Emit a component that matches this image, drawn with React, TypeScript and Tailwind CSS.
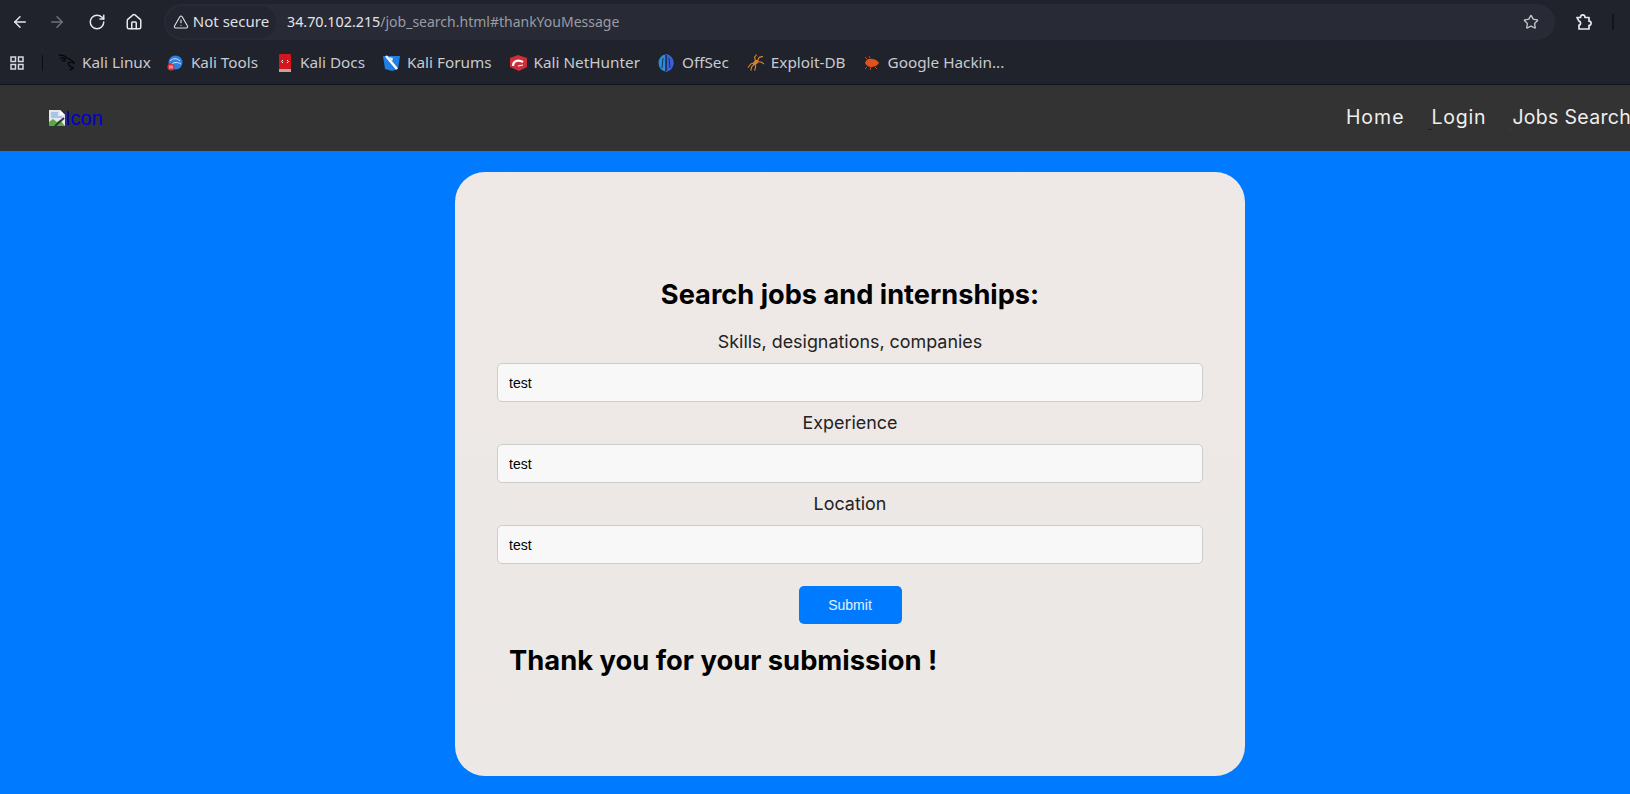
import React from "react";
import { ArrowLeft, ArrowRight, RotateCw, House, TriangleAlert, Star } from "lucide-react";

const Puzzle = () => (
  <svg width="20" height="20" viewBox="0 0 20 20" fill="none" stroke="#e6e7ea" strokeWidth="1.7" strokeLinejoin="round">
    <path d="M3 5.500h3.600a2.200 2.200 0 1 1 4.300 0H15v3.700a2.100 2.100 0 1 1 0 4.200V17H5v-3.800a2.100 2.100 0 0 0 0-4.100z" />
  </svg>
);

const Apps = () => (
  <svg width="16" height="16" viewBox="0 0 16 16" fill="none" stroke="#d8d9dc" strokeWidth="1.5">
    <rect x="2" y="2" width="4.5" height="4.5" /><rect x="9.5" y="2" width="4.5" height="4.5" />
    <rect x="2" y="9.5" width="4.5" height="4.5" /><rect x="9.5" y="9.5" width="4.5" height="4.5" />
  </svg>
);

const KaliLinux = () => (
  <svg width="18" height="18" viewBox="0 0 18 18" fill="none" stroke="#050507" strokeWidth="1.3">
    <path d="M1 1c4-1 7 1 9 3 3 1 6 3 7 5-2-1-5-1-6 0 0 2 1 4 5 5-2 2-3 3-4 2M2 4c2-1 4 0 6 1M4 7c2-1 3-1 4 0" />
  </svg>
);
const KaliTools = () => (
  <svg width="16" height="16" viewBox="0 0 16 16">
    <circle cx="8.5" cy="7.5" r="7" fill="#2f7fe0" />
    <path d="M3 6c3-3 7-3 10 0M5 9c2-2 6-2 9 0" stroke="#cfe4fb" strokeWidth="1" fill="none" />
    <circle cx="4" cy="12" r="3.6" fill="#dc2f3a" />
    <path d="M3 10.500v3M5 10.500v3" stroke="#fff" strokeWidth="0.9" />
  </svg>
);
const KaliDocs = () => (
  <svg width="14" height="18" viewBox="0 0 14 18">
    <rect x="1" y="0" width="12" height="15" rx="1" fill="#d2161e" />
    <rect x="1" y="15" width="12" height="3" fill="#c9a0a0" />
    <path d="M5 6 3.500 7.500 5 9M9 6l1.500 1.500L9 9" stroke="#fff" strokeWidth="1" fill="none" />
  </svg>
);
const KaliForums = () => (
  <svg width="17" height="16" viewBox="0 0 17 16">
    <path d="M0 1h17l-2 13-6 2-7-2z" fill="#1f7fe8" />
    <path d="M3 1l11 13" stroke="#fff" strokeWidth="2.4" />
    <path d="M6 2l4 1-1 4z" fill="#e8eef5" />
  </svg>
);
const NetHunter = () => (
  <svg width="17" height="16" viewBox="0 0 17 16">
    <path d="M0 3 8 0l9 3v9l-8 4-9-4z" fill="#c9303a" />
    <path d="M3 11c0-5 5-7 10-4" stroke="#fff" strokeWidth="2.2" fill="none" />
    <path d="M8 11l5-1" stroke="#fff" strokeWidth="1.2" />
  </svg>
);
const OffSec = () => (
  <svg width="16" height="18" viewBox="0 0 16 18">
    <ellipse cx="8" cy="9" rx="7.5" ry="8.5" fill="#2b8fd8" />
    <path d="M8 0C11 0 15 4 15.500 9 15.500 13 12 17 8 18z" fill="#3b5fd8" />
    <path d="M8 1v16" stroke="#20222c" strokeWidth="1.4" />
    <path d="M5 4 4 14M11 4l1 10" stroke="#1d2f5c" strokeWidth="1" />
  </svg>
);
const ExploitDb = () => (
  <svg width="18" height="18" viewBox="0 0 18 18" fill="none" stroke="#d9842a" strokeWidth="1.2">
    <path d="M7 9c2-3 4-3 5-2-1 2-3 4-5 4z" fill="#d9842a" />
    <path d="M7 9 4 10l-3 4M7 11l-2 2-1 4M9 11v3l-1 3M9 7 8 3l2-3M11 7l2-4 4-1M12 8l3 0 3 2" />
  </svg>
);
const Ghdb = () => (
  <svg width="16" height="14" viewBox="0 0 16 14">
    <path d="M1 7c1-4 4-5 7-4 3 0 6 2 7 4-2 3-5 4-8 4-3 0-5-2-6-4z" fill="#e0531c" />
    <path d="M3 3 1 1M6 2 5 0M3 11l-2 2M7 11l-1 3M11 11l2 2" stroke="#c9481a" strokeWidth="1" />
  </svg>
);

const BrokenImage = () => (
  <svg width="16" height="16" viewBox="0 0 16 16" className="shrink-0">
    <path d="M0 0h11l5 5v11H0z" fill="#e4e8ee" />
    <path d="M11 0v5h5z" fill="#fff" />
    <path d="M2 2h7v4h4v2H2z" fill="#a9c4ec" />
    <path d="M0 16V12l4-3 4 3 3-2 5 6z" fill="#5aa845" />
    <path d="M6 16l9-8" stroke="#333" strokeWidth="2" />
  </svg>
);

const bookmarks: [React.ReactNode, string][] = [
  [<KaliLinux />, "Kali Linux"],
  [<KaliTools />, "Kali Tools"],
  [<KaliDocs />, "Kali Docs"],
  [<KaliForums />, "Kali Forums"],
  [<NetHunter />, "Kali NetHunter"],
  [<OffSec />, "OffSec"],
  [<ExploitDb />, "Exploit-DB"],
  [<Ghdb />, "Google Hackin..."],
];

const Field = ({ label }: { label: string }) => (
  <div className="flex flex-col items-center">
    <label className="h-[21px] flex items-center text-[17.900px] text-[#222] [font-family:Inter,sans-serif] font-normal translate-y-[1px]">{label}</label>
    <input
      readOnly
      value="test"
      className="mt-[11px] w-full h-[39px] rounded-[5px] border border-[#cccccc] bg-[#f8f8f8] px-[11px] text-[14px] text-black outline-none [font-family:'Liberation_Sans',sans-serif]"
    />
  </div>
);

export default function App() {
  return (
    <div className="w-[1630px] h-[794px] overflow-hidden flex flex-col bg-[#007bff]">
      <div className="bg-[#20222c] shrink-0 [font-family:'Noto_Sans',sans-serif]">
        <div className="h-[43px] flex items-center">
          <div className="flex items-center pl-[11px] text-[#e6e7ea]">
            <ArrowLeft size={18} strokeWidth={2} />
            <ArrowRight size={18} strokeWidth={2} className="ml-[19px] text-[#6f7178]" />
            <RotateCw size={18} strokeWidth={2} className="ml-[22px]" />
            <House size={18} strokeWidth={2} className="ml-[19px]" />
          </div>
          <div className="ml-[21px] w-[1391px] h-[36px] rounded-full bg-[#282a36] flex items-center">
            <div className="h-[32px] ml-[2px] w-[110px] rounded-full bg-[#232530] flex items-center justify-center gap-[4px] text-[#dfe0e3] text-[15px]">
              <TriangleAlert size={16} strokeWidth={1.7} />
              <span>Not secure</span>
            </div>
            <div className="ml-[11px] text-[14px] text-[#9a9ca3] whitespace-nowrap">
              <span className="text-[#e4e5e8] text-[14.300px]">34.70.102.215</span>/job_search.html#thankYouMessage
            </div>
            <Star size={16} strokeWidth={2} className="ml-auto mr-[16px] text-[#c4c5c9]" />
          </div>
          <div className="ml-[19px]"><Puzzle /></div>
          <div className="ml-[18px] w-[2px] h-[16px] bg-[#14151b]" />
        </div>
        <div className="h-[39px] flex items-center pl-[9px] pb-[2px] box-content border-b border-[#14151b]">
          <Apps />
          <div className="ml-[17px] mr-[15px] w-[1px] h-[16px] bg-[#0c0d12]" />
          <div className="flex items-center gap-[18px]">
            {bookmarks.map(([icon, name], i) => (
              <div key={name} className={i === 0 ? "flex items-center gap-[7px] text-[15.300px] text-[#c9cbd0] whitespace-nowrap mr-[-2px]" : "flex items-center gap-[7px] text-[15.300px] text-[#c9cbd0] whitespace-nowrap"}>
                <span className="w-[17px] flex justify-center">{icon}</span>
                <span>{name}</span>
              </div>
            ))}
          </div>
        </div>
      </div>

      <div className="h-[66px] shrink-0 bg-[#333333] flex items-center pl-[49px] overflow-hidden">
        <a className="flex items-center text-[#0000cc] text-[20px] [font-family:'Liberation_Sans',sans-serif]">
          <BrokenImage />
          <span>Icon</span>
        </a>
        <nav className="ml-auto flex items-center text-[19.500px] text-[#eeeeee] whitespace-nowrap [font-family:Inter,sans-serif] translate-x-[1px]">
          <span className="tracking-[1px]">Home</span>
          <span className="ml-[23px] w-[4px] self-end mb-[3px] h-[1px] bg-[#0000ee]" />
          <span className="tracking-[0.800px]">Login</span>
          <span className="ml-[22px] w-[4px] self-end mb-[3px] h-[1px] bg-[#551a8b]" />
          <span className="tracking-[0.300px]">Jobs Search</span>
        </nav>
      </div>

      <div className="pt-[21px] pl-[455px]">
        <div className="w-[790px] h-[604px] rounded-[30px] bg-[#eee9e6] bg-linear-to-b from-[#eee9e6] to-[#ece8e5] px-[42px] pt-[107px]">
          <h2 className="text-center text-[27.200px] leading-[32px] font-bold text-black [font-family:Inter,sans-serif]">Search jobs and internships:</h2>
          <div className="mt-[20px] flex flex-col gap-[10px]">
            <Field label="Skills, designations, companies" />
            <Field label="Experience" />
            <Field label="Location" />
          </div>
          <div className="flex justify-center mt-[22px]">
            <button className="w-[103px] h-[38px] rounded-[5px] bg-[#007bff] text-white/90 text-[14px] [font-family:'Liberation_Sans',sans-serif]">Submit</button>
          </div>
          <h3 className="ml-[12px] mt-[20px] text-[27.350px] leading-[34px] font-bold text-black [font-family:Inter,sans-serif]">Thank you for your submission !</h3>
        </div>
      </div>
    </div>
  );
}
